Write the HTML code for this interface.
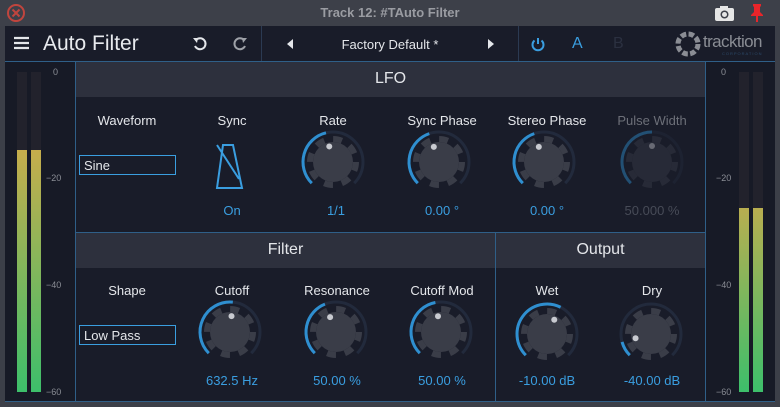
<!DOCTYPE html>
<html><head><meta charset="utf-8"><style>
*{margin:0;padding:0;box-sizing:border-box}
body{width:780px;height:407px;background:#3c3f48;font-family:"Liberation Sans",sans-serif;position:relative;overflow:hidden}
.a{position:absolute}
.t{position:absolute;color:#e4e6ea;font-size:13px;text-align:center}
.v{position:absolute;color:#3a9ee0;font-size:13px;text-align:center}
.sc{position:absolute;color:#8a8d95;font-size:9px}
</style></head><body>
<div class="a" style="left:0;top:0;width:780px;height:26px;background:#3d4049"></div>
<svg class="a" style="left:6px;top:3px" width="20" height="20"><circle cx="10" cy="10" r="8" fill="none" stroke="#c0453e" stroke-width="2"/><path d="M6.5 6.5L13.5 13.5M13.5 6.5L6.5 13.5" stroke="#c0453e" stroke-width="2"/></svg>
<div class="a" style="left:0;width:780px;top:5px;text-align:center;color:#9a9ca2;font-weight:bold;font-size:13px">Track 12: #TAuto Filter</div>
<svg class="a" style="left:714px;top:5px" width="22" height="17"><rect x="1" y="3" width="19" height="13" rx="2" fill="#e6e6e6"/><rect x="6" y="1" width="8" height="4" fill="#e6e6e6"/><circle cx="10.5" cy="9.5" r="4" fill="#3d4049"/><circle cx="10.5" cy="9.5" r="2.5" fill="#e6e6e6"/></svg>
<svg class="a" style="left:749px;top:3px" width="16" height="20"><path d="M4 1h8v2l-1 1v5l3 3v1H2v-1l3-3V4L4 3z" fill="#e8252a"/><rect x="7" y="13" width="2" height="6" fill="#e8252a"/></svg>
<div class="a" style="left:5px;top:26px;width:770px;height:35px;background:#191c29"></div>
<div class="a" style="left:261px;top:26px;width:1px;height:35px;background:#2b3a52"></div>
<div class="a" style="left:518px;top:26px;width:1px;height:35px;background:#2b3a52"></div>
<svg class="a" style="left:13px;top:36px" width="18" height="14"><path d="M1 2h15M1 7h15M1 12h15" stroke="#e4e6ea" stroke-width="2.2"/></svg>
<div class="a" style="left:43px;top:32px;color:#e8eaee;font-size:21px">Auto Filter</div>
<svg class="a" style="left:191px;top:35px" width="18" height="18"><path d="M5 5A5.5 5.5 0 1 1 4 11" fill="none" stroke="#e4e6ea" stroke-width="2"/><path d="M2 3l5 0-1 5z" fill="#e4e6ea"/></svg>
<svg class="a" style="left:231px;top:35px" width="18" height="18"><path d="M13 5A5.5 5.5 0 1 0 14 11" fill="none" stroke="#9ea1a8" stroke-width="2"/><path d="M16 3l-5 0 1 5z" fill="#9ea1a8"/></svg>
<svg class="a" style="left:285px;top:38px" width="10" height="12"><path d="M8 1L2 6l6 5z" fill="#e4e6ea"/></svg>
<div class="a" style="left:300px;width:180px;top:37px;text-align:center;color:#e4e6ea;font-size:13px">Factory Default *</div>
<svg class="a" style="left:486px;top:38px" width="10" height="12"><path d="M2 1l6 5-6 5z" fill="#e4e6ea"/></svg>
<svg class="a" style="left:530px;top:36px" width="16" height="16"><path d="M4.5 4.5A5.5 5.5 0 1 0 11.5 4.5" fill="none" stroke="#3a9ee0" stroke-width="2"/><path d="M8 2v6" stroke="#3a9ee0" stroke-width="2"/></svg>
<div class="a" style="left:572px;top:35px;color:#3a9ee0;font-size:16px">A</div>
<div class="a" style="left:613px;top:35px;color:#2b3040;font-size:16px">B</div>
<svg class="a" style="left:673px;top:30px" width="30" height="28"><circle cx="15" cy="14" r="10" fill="none" stroke="#8a8d94" stroke-width="5" stroke-dasharray="5.5 2.4"/></svg>
<div class="a" style="left:703px;top:32px;color:#8a8d94;font-size:17px;letter-spacing:-0.6px">tracktion</div>
<div class="a" style="left:722px;top:51px;color:#2c4a6a;font-size:4px;letter-spacing:1px">CORPORATION</div>
<div class="a" style="left:5px;top:61px;width:770px;height:1px;background:#2f5f88"></div>
<div class="a" style="left:5px;top:62px;width:70px;height:339px;background:#171a26"></div>
<div class="a" style="left:705px;top:62px;width:70px;height:339px;background:#171a26"></div>
<div class="a" style="left:75px;top:62px;width:1px;height:339px;background:#2f5f88"></div>
<div class="a" style="left:705px;top:62px;width:1px;height:339px;background:#2f5f88"></div>
<div class="a" style="left:17px;top:72px;width:10px;height:320px;background:#22222c"></div>
<div class="a" style="left:31px;top:72px;width:10px;height:320px;background:#22222c"></div>
<div class="a" style="left:17px;top:150px;width:10px;height:242px;background:linear-gradient(#c6ad4c,#3dbf6b)"></div>
<div class="a" style="left:31px;top:150px;width:10px;height:242px;background:linear-gradient(#c6ad4c,#3dbf6b)"></div>
<div class="sc" style="left:53px;top:67px">0</div>
<div class="sc" style="left:46px;top:173px">−20</div>
<div class="sc" style="left:46px;top:280px">−40</div>
<div class="sc" style="left:46px;top:387px">−60</div>
<div class="a" style="left:739px;top:72px;width:10px;height:320px;background:#22222c"></div>
<div class="a" style="left:753px;top:72px;width:10px;height:320px;background:#22222c"></div>
<div class="a" style="left:739px;top:208px;width:10px;height:184px;background:linear-gradient(#b8ae50,#3dbf6b)"></div>
<div class="a" style="left:753px;top:208px;width:10px;height:184px;background:linear-gradient(#b8ae50,#3dbf6b)"></div>
<div class="sc" style="left:721px;top:67px">0</div>
<div class="sc" style="left:716px;top:173px">−20</div>
<div class="sc" style="left:716px;top:280px">−40</div>
<div class="sc" style="left:716px;top:387px">−60</div>
<div class="a" style="left:76px;top:62px;width:629px;height:35px;background:#2d303d"></div>
<div class="a" style="left:76px;top:97px;width:629px;height:135px;background:#191c29"></div>
<div class="a" style="left:76px;top:232px;width:629px;height:1px;background:#2f5f88"></div>
<div class="a" style="left:76px;top:233px;width:629px;height:35px;background:#2d303d"></div>
<div class="a" style="left:76px;top:268px;width:629px;height:133px;background:#191c29"></div>
<div class="a" style="left:495px;top:233px;width:1px;height:168px;background:#2f5f88"></div>
<div class="a" style="left:5px;top:401px;width:770px;height:1px;background:#2f5f88"></div>
<div class="t" style="left:76px;width:629px;top:70px;font-size:16px">LFO</div>
<div class="t" style="left:76px;width:419px;top:241px;font-size:16px">Filter</div>
<div class="t" style="left:496px;width:209px;top:241px;font-size:16px">Output</div>
<div class="t" style="left:77px;width:100px;top:113px">Waveform</div>
<div class="t" style="left:182px;width:100px;top:113px">Sync</div>
<div class="t" style="left:283px;width:100px;top:113px">Rate</div>
<div class="t" style="left:392px;width:100px;top:113px">Sync Phase</div>
<div class="t" style="left:497px;width:100px;top:113px">Stereo Phase</div>
<div class="t" style="left:602px;width:100px;top:113px;color:#6c6f78">Pulse Width</div>
<div class="a" style="left:79px;top:155px;width:97px;height:20px;border:1px solid #3a9ee0;color:#e4e6ea;font-size:13px;padding:2px 4px">Sine</div>
<svg class="a" style="left:214px;top:141px" width="36" height="48"><path d="M9 4h10l9 43H3zM3 4l22 34" fill="none" stroke="#3a9ee0" stroke-width="2"/></svg>
<div class="v" style="left:182px;width:100px;top:203px">On</div>
<div class="v" style="left:286px;width:100px;top:203px">1/1</div>
<div class="v" style="left:392px;width:100px;top:203px">0.00 °</div>
<div class="v" style="left:497px;width:100px;top:203px">0.00 °</div>
<div class="v" style="left:602px;width:100px;top:203px;color:#474b57">50.000 %</div>
<div class="t" style="left:77px;width:100px;top:283px">Shape</div>
<div class="t" style="left:182px;width:100px;top:283px">Cutoff</div>
<div class="t" style="left:287px;width:100px;top:283px">Resonance</div>
<div class="t" style="left:392px;width:100px;top:283px">Cutoff Mod</div>
<div class="t" style="left:497px;width:100px;top:283px">Wet</div>
<div class="t" style="left:602px;width:100px;top:283px">Dry</div>
<div class="a" style="left:79px;top:325px;width:97px;height:20px;border:1px solid #3a9ee0;color:#e4e6ea;font-size:13px;padding:2px 4px">Low Pass</div>
<div class="v" style="left:182px;width:100px;top:373px">632.5 Hz</div>
<div class="v" style="left:287px;width:100px;top:373px">50.00 %</div>
<div class="v" style="left:392px;width:100px;top:373px">50.00 %</div>
<div class="v" style="left:497px;width:100px;top:373px">-10.00 dB</div>
<div class="v" style="left:602px;width:100px;top:373px">-40.00 dB</div>
<svg class="a" style="left:0;top:0" width="780" height="407">
<defs><g id="k"><path d="M-21.21 21.21A30 30 0 1 1 21.21 21.21" fill="none" stroke="#222a3c" stroke-width="3"/><circle r="20" fill="#3a3d48"/><circle r="23" fill="none" stroke="#3a3d48" stroke-width="6" stroke-dasharray="9 9.06"/></g></defs>
<g transform="translate(333,162)"><use href="#k"/><path d="M-21.21 21.21A30 30 0 0 1 -7 -29.17" fill="none" stroke="#2f8fd0" stroke-width="3"/><circle cx="-3.73" cy="-15.56" r="3" fill="#c8cad0"/></g>
<g transform="translate(439,162)"><use href="#k"/><path d="M-21.21 21.21A30 30 0 0 1 -9.72 -28.38" fill="none" stroke="#2f8fd0" stroke-width="3"/><circle cx="-5.18" cy="-15.14" r="3" fill="#c8cad0"/></g>
<g transform="translate(544,162)"><use href="#k"/><path d="M-21.21 21.21A30 30 0 0 1 -9.72 -28.38" fill="none" stroke="#2f8fd0" stroke-width="3"/><circle cx="-5.18" cy="-15.14" r="3" fill="#c8cad0"/></g>
<g transform="translate(652,162)" opacity="0.45"><use href="#k"/><path d="M-21.21 21.21A30 30 0 0 1 0 -30" fill="none" stroke="#2f8fd0" stroke-width="3"/><circle cx="0" cy="-16" r="3" fill="#c8cad0"/></g>
<g transform="translate(230,332)"><use href="#k"/><path d="M-21.21 21.21A30 30 0 0 1 2.82 -29.87" fill="none" stroke="#2f8fd0" stroke-width="3"/><circle cx="1.51" cy="-15.93" r="3" fill="#c8cad0"/></g>
<g transform="translate(336,332)"><use href="#k"/><path d="M-21.21 21.21A30 30 0 0 1 -11.04 -27.89" fill="none" stroke="#2f8fd0" stroke-width="3"/><circle cx="-5.89" cy="-14.88" r="3" fill="#c8cad0"/></g>
<g transform="translate(441,332)"><use href="#k"/><path d="M-21.21 21.21A30 30 0 0 1 -5.62 -29.47" fill="none" stroke="#2f8fd0" stroke-width="3"/><circle cx="-3" cy="-15.7" r="3" fill="#c8cad0"/></g>
<g transform="translate(547,334)"><use href="#k"/><path d="M-21.21 21.21A30 30 0 0 1 13.62 -26.73" fill="none" stroke="#2f8fd0" stroke-width="3"/><circle cx="7.26" cy="-14.26" r="3" fill="#c8cad0"/></g>
<g transform="translate(651,334)"><use href="#k"/><path d="M-21.21 21.21A30 30 0 0 1 -28.94 7.92" fill="none" stroke="#2f8fd0" stroke-width="3"/><circle cx="-15.43" cy="4.22" r="3" fill="#c8cad0"/></g>
</svg>
</body></html>
